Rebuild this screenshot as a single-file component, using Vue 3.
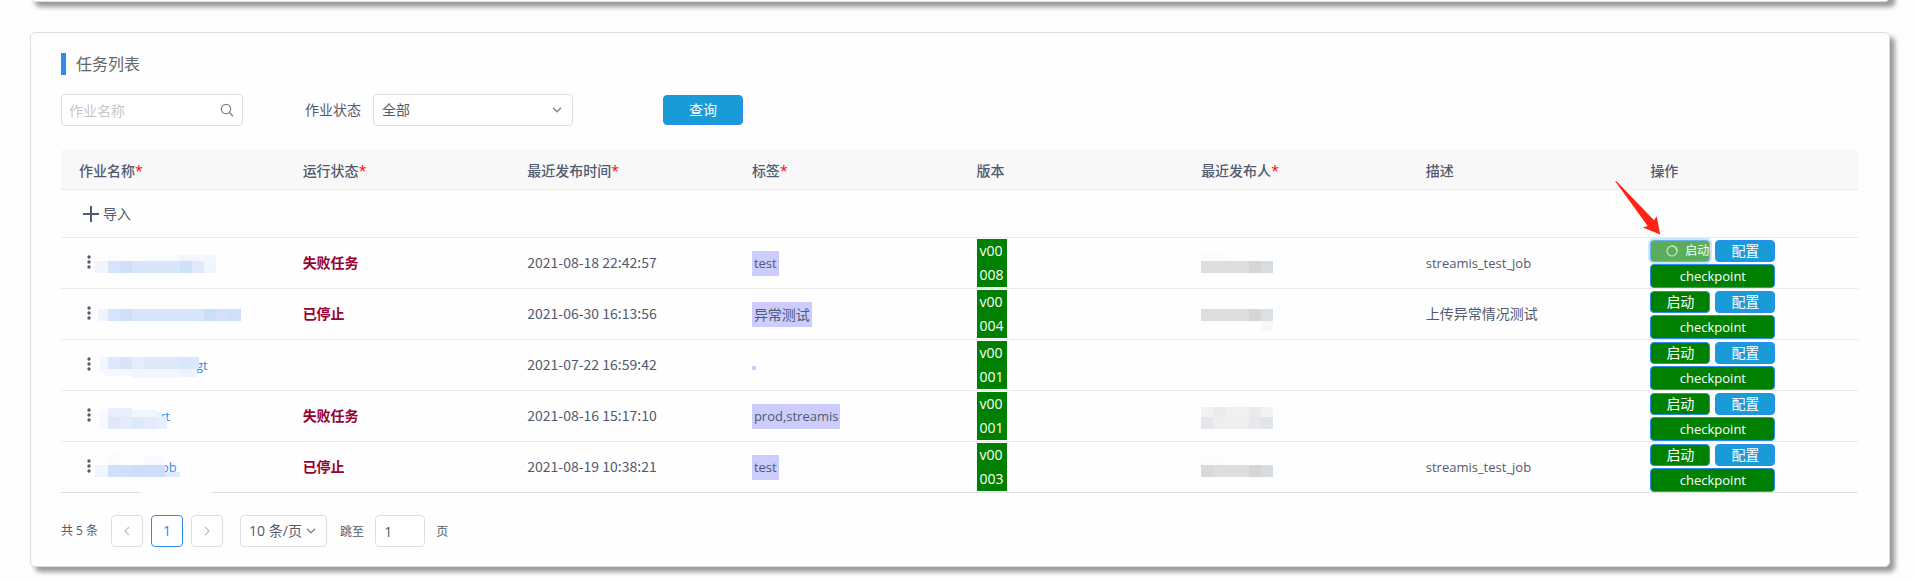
<script setup>
import { ref } from 'vue'

const keyword = ref('')
const status = ref('all')
const pageSize = ref('10')
const jumpTo = ref('1')

const columns = [
  { title: '作业名称', required: true },
  { title: '运行状态', required: true },
  { title: '最近发布时间', required: true },
  { title: '标签', required: true },
  { title: '版本', required: false },
  { title: '最近发布人', required: true },
  { title: '描述', required: false },
  { title: '操作', required: false }
]

// Chinese copy is set one size larger than Latin copy in the table body.
const isChinese = (text) => /[\u4e00-\u9fff]/.test(text)

// Mask pieces are [x, y, width, height, fill] inside a 24px high strip.
const jobs = [
  {
    id: 1, tail: '', maskWidth: 122, state: '失败任务', time: '2021-08-18 22:42:57', tag: 'test',
    version: ['v00', '008'], desc: 'streamis_test_job', loading: true,
    mask: [[50, 4, 36, 6, '#f8fafe'], [86, 4, 36, 6, '#f2f7fe'], [14, 3, 12, 7, '#fbfcfe'], [0, 10, 14, 12, '#f1f5fd'], [14, 10, 12, 12, '#d7e4fb'], [26, 10, 12, 12, '#cfdef9'], [38, 10, 48, 12, '#d8e5fb'], [86, 10, 12, 12, '#cfe1fa'], [98, 10, 12, 12, '#dfeafc'], [110, 10, 12, 12, '#f1f6fe']],
    owner: [[0, 2, 24, 8, '#fafcfb'], [0, 10, 48, 12, '#dcdddf'], [48, 10, 12, 12, '#d5d5d7'], [60, 10, 12, 12, '#d7dce1']]
  },
  {
    id: 2, tail: '', maskWidth: 148, state: '已停止', time: '2021-06-30 16:13:56', tag: '异常测试',
    version: ['v00', '004'], desc: '上传异常情况测试', loading: false,
    mask: [[4, 7, 10, 12, '#eef3fd'], [14, 7, 12, 12, '#d7e4fb'], [26, 7, 12, 12, '#cfdef9'], [38, 7, 72, 12, '#d8e5fb'], [110, 7, 12, 12, '#c9dff8'], [122, 7, 12, 12, '#d3e0f8'], [134, 7, 13, 12, '#cde0fa']],
    owner: [[0, 7, 48, 12, '#dcdddf'], [48, 7, 12, 12, '#d5d5d7'], [60, 7, 12, 12, '#dae0e4'], [60, 19, 12, 10, '#f8f8f9']]
  },
  {
    id: 3, tail: 'gt', maskWidth: 102, state: '', time: '2021-07-22 16:59:42', tag: '',
    version: ['v00', '001'], desc: '', loading: false,
    mask: [[6, 4, 8, 14, '#f1f5fe'], [14, 4, 12, 12, '#dfe8fb'], [26, 4, 12, 12, '#d7e3fb'], [38, 4, 12, 12, '#e5edfc'], [50, 4, 36, 12, '#dde8fb'], [86, 4, 19, 12, '#d9e7fc'], [10, 16, 28, 7, '#f5f8fe'], [38, 16, 48, 9, '#f2f6fe'], [86, 16, 17, 8, '#eef4fe']],
    owner: []
  },
  {
    id: 4, tail: 'rt', maskWidth: 66, state: '失败任务', time: '2021-08-16 15:17:10', tag: 'prod,streamis',
    version: ['v00', '001'], desc: '', loading: false,
    mask: [[5, 6, 9, 18, '#f7f9fe'], [14, 4, 24, 9, '#e8effc'], [38, 6, 24, 7, '#f0f5fe'], [62, 8, 6, 6, '#edf3fe'], [14, 13, 12, 12, '#dfe8fb'], [26, 13, 12, 12, '#e4ecfb'], [38, 13, 12, 12, '#dce9fb'], [50, 13, 12, 12, '#e3ecfb'], [62, 13, 11, 12, '#e7effd']],
    owner: [[0, 3, 12, 10, '#f1f2f3'], [12, 3, 12, 10, '#e9ebec'], [24, 3, 24, 10, '#eff0f1'], [48, 3, 12, 10, '#ebebec'], [60, 3, 12, 10, '#f1f3f5'], [0, 13, 12, 12, '#e6e7ea'], [12, 13, 36, 12, '#eeeeef'], [48, 13, 12, 12, '#e8e9ec'], [60, 13, 12, 12, '#e0e5e9']]
  },
  {
    id: 5, tail: 'ob', maskWidth: 67, state: '已停止', time: '2021-08-19 10:38:21', tag: 'test',
    version: ['v00', '003'], desc: 'streamis_test_job', loading: false,
    mask: [[14, -3, 12, 13, '#fafbfe'], [50, 0, 20, 10, '#f8fafe'], [1, 10, 13, 12, '#f1f5fe'], [14, 10, 24, 12, '#d1e0fa'], [38, 10, 33, 12, '#cddefa'], [71, 17, 15, 5, '#dfeafd'], [47, 35, 70, 5, '#fdfdfd']],
    owner: [[0, 1, 24, 9, '#fafbfb'], [0, 10, 12, 12, '#d7d9da'], [12, 10, 36, 12, '#dddfdf'], [48, 10, 12, 12, '#d3d5d7'], [60, 10, 12, 12, '#d7dce1']]
  }
]
</script>

<template>
  <div class="page">
    <section class="card card-above"></section>

    <section class="card task-card">
      <h1 class="title">任务列表</h1>

      <form class="filters" @submit.prevent>
        <div class="search">
          <input v-model="keyword" class="field" type="text" placeholder="作业名称" aria-label="作业名称" />
          <svg class="search-icon" viewBox="0 0 14 14" width="14" height="14" aria-hidden="true">
            <circle cx="6" cy="6" r="4.7" fill="none" stroke="#808695" stroke-width="1.2" />
            <path d="M9.4 9.4 13 13.2" fill="none" stroke="#808695" stroke-width="1.4" />
          </svg>
        </div>
        <label class="status-label" for="job-status">作业状态</label>
        <div class="select status-select">
          <select id="job-status" v-model="status" class="field">
            <option value="all">全部</option>
          </select>
          <svg class="chevron" viewBox="0 0 10 6" width="10" height="6" aria-hidden="true">
            <path d="M1 .8 5 4.8 9 .8" fill="none" stroke="#808695" stroke-width="1.4" />
          </svg>
        </div>
        <button class="query" type="submit">查询</button>
      </form>

      <table class="jobs">
        <thead>
          <tr>
            <th v-for="col in columns" :key="col.title" scope="col">
              {{ col.title }}<span v-if="col.required" class="required">*</span>
            </th>
          </tr>
        </thead>
        <tbody>
          <tr class="import-row">
            <td colspan="8">
              <button class="import" type="button">
                <svg viewBox="0 0 16 16" width="16" height="16" aria-hidden="true">
                  <path d="M8 0v16M0 8h16" fill="none" stroke="#515a6e" stroke-width="2" />
                </svg>
                <span>导入</span>
              </button>
            </td>
          </tr>
          <tr v-for="job in jobs" :key="job.id">
            <td>
              <div class="name">
                <button class="more" type="button" aria-label="更多">
                  <svg viewBox="0 0 4 14" width="4" height="14" aria-hidden="true">
                    <circle cx="2" cy="2" r="1.7" fill="#515a6e" />
                    <circle cx="2" cy="7" r="1.7" fill="#515a6e" />
                    <circle cx="2" cy="12" r="1.7" fill="#515a6e" />
                  </svg>
                </button>
                <svg class="mask" :width="job.maskWidth" height="24" aria-hidden="true">
                  <rect v-for="(m, i) in job.mask" :key="i" :x="m[0]" :y="m[1]" :width="m[2]" :height="m[3]" :fill="m[4]" />
                </svg>
                <a v-if="job.tail" class="tail" href="#">{{ job.tail }}</a>
              </div>
            </td>
            <td><strong class="state">{{ job.state }}</strong></td>
            <td class="time">{{ job.time }}</td>
            <td><span class="tag" :class="{ empty: !job.tag, chinese: isChinese(job.tag) }">{{ job.tag }}</span></td>
            <td>
              <div class="version"><span v-for="part in job.version" :key="part">{{ part }}</span></div>
            </td>
            <td>
              <svg class="mask" width="72" height="24" aria-hidden="true">
                <rect v-for="(m, i) in job.owner" :key="i" :x="m[0]" :y="m[1]" :width="m[2]" :height="m[3]" :fill="m[4]" />
              </svg>
            </td>
            <td><span :class="{ chinese: isChinese(job.desc) }">{{ job.desc }}</span></td>
            <td>
              <div class="actions">
                <button class="btn start" :class="{ loading: job.loading }" type="button">
                  <svg v-if="job.loading" viewBox="0 0 12 12" width="12" height="12" aria-hidden="true">
                    <circle cx="6" cy="6" r="5" fill="none" stroke="#b6dab6" stroke-width="1.5" />
                    <path d="M6 1a5 5 0 0 1 5 5" fill="none" stroke="#c4e1c4" stroke-width="1.5" />
                  </svg>
                  <span>启动</span>
                </button>
                <button class="btn config" type="button">配置</button>
                <button class="btn checkpoint" type="button">checkpoint</button>
                <svg v-if="job.loading" class="pointer" viewBox="0 0 46 54" width="46" height="54" aria-hidden="true">
                  <path d="M0 0 2 .7 39 39.2 41.7 35.3 45.2 53.5 27.8 46.5 32.7 45z" fill="#ff2316" />
                </svg>
              </div>
            </td>
          </tr>
        </tbody>
      </table>

      <nav class="pager" aria-label="分页">
        <span class="small">共 5 条</span>
        <div class="pages">
          <button class="page-btn" type="button" aria-label="上一页" disabled>
            <svg viewBox="0 0 6 10" width="6" height="10"><path d="M5 1 1 5l4 4" fill="none" stroke="#c0c4cc" stroke-width="1.4" /></svg>
          </button>
          <button class="page-btn current" type="button" aria-current="page">1</button>
          <button class="page-btn" type="button" aria-label="下一页" disabled>
            <svg viewBox="0 0 6 10" width="6" height="10"><path d="M1 1l4 4-4 4" fill="none" stroke="#c0c4cc" stroke-width="1.4" /></svg>
          </button>
        </div>
        <div class="select size-select">
          <select v-model="pageSize" class="field" aria-label="每页条数">
            <option value="10">10 条/页</option>
          </select>
          <svg class="chevron" viewBox="0 0 10 6" width="10" height="6" aria-hidden="true">
            <path d="M1 .8 5 4.8 9 .8" fill="none" stroke="#808695" stroke-width="1.4" />
          </svg>
        </div>
        <label class="small jump-label" for="jump-page">跳至</label>
        <input id="jump-page" v-model="jumpTo" class="field jump" type="text" />
        <span class="small jump-label">页</span>
      </nav>
    </section>
  </div>
</template>

<style>
body {
  margin: 0;
  background: #fefefe;
}
</style>

<style scoped>
.page {
  display: flex;
  flex-direction: column;
  gap: 30px;
  padding: 0 24px 13px 30px;
  overflow: hidden;
  color: #515a6e;
  font: 14px/24px "Open Sans", "Noto Sans CJK SC", sans-serif;
}

button,
input,
select {
  box-sizing: border-box;
  margin: 0;
  padding: 0;
  color: inherit;
  font: inherit;
}

.card {
  background: #fefefe;
  border: 1px solid #dcdee2;
  border-radius: 5px;
  box-shadow: 5px 5px 5px #999;
}

.card-above {
  height: 40px;
  margin-top: -40px;
}

.task-card {
  padding: 20px 30px 19px;
}

.title {
  margin: 0;
  padding-left: 10px;
  border-left: 5px solid #2d8cf0;
  color: #666;
  font-size: 16px;
  font-weight: 400;
  line-height: 22px;
}

.filters {
  display: flex;
  align-items: center;
  margin-top: 19px;
}

.search {
  position: relative;
  width: 182px;
}

.field {
  display: block;
  width: 100%;
  height: 32px;
  padding: 0 8px;
  border: 1px solid #dcdee2;
  border-radius: 4px;
  background: #fff;
  outline: none;
  appearance: none;
}

.search .field {
  padding: 0 7px;
}

.field::placeholder {
  color: #c5c8ce;
  opacity: 1;
}

.search-icon {
  position: absolute;
  top: 9px;
  right: 9px;
}

.status-label {
  margin: 0 12px 0 62px;
}

.select {
  position: relative;
}

.status-select {
  width: 200px;
}

.chevron {
  position: absolute;
  top: 13px;
  right: 11px;
  pointer-events: none;
}

.query {
  width: 80px;
  height: 30px;
  margin-left: 90px;
  border: 1px solid #2d8cf0;
  border-radius: 4px;
  background: #199bd8;
  color: #fff;
}

.jobs {
  width: calc(100% - 1px);
  margin-top: 24px;
  border-collapse: separate;
  border-spacing: 0;
  table-layout: fixed;
}

.jobs th {
  height: 37px;
  padding: 2px 18px 0;
  border-bottom: 1px solid #e8eaec;
  background: #f8f8f9;
  font-weight: 500;
  text-align: left;
}

.jobs th,
.jobs td {
  padding-left: 17px;
}

.jobs th:first-child,
.jobs td:first-child {
  padding-left: 18px;
}

.required {
  color: #f00;
}

.jobs td {
  height: 50px;
  padding-top: 0;
  padding-right: 18px;
  padding-bottom: 0;
  border-bottom: 1px solid #e8eaec;
  font-size: 13px;
}

.jobs .time {
  height: 48px;
  padding-bottom: 2px;
  font-family: "Noto Sans CJK SC", sans-serif;
  font-size: 14px;
}

.jobs .chinese {
  font-size: 14px;
}

.jobs tr:last-child td {
  border-bottom-color: #dcdee2;
}

.jobs .import-row td {
  height: 47px;
}

.import {
  display: flex;
  align-items: center;
  gap: 4px;
  padding-left: 4px;
  border: 0;
  background: none;
  font-size: 14px;
}

.name {
  display: flex;
  align-items: center;
}

.more {
  display: flex;
  padding: 0 3px 2px 8px;
  border: 0;
  background: none;
}

.mask {
  position: relative;
  z-index: 1;
  display: block;
  overflow: visible;
}

.tail {
  color: #2d8cf0;
  text-decoration: none;
}

.state {
  color: #903;
  font-size: 14px;
}

.tag {
  display: inline-block;
  padding: 0 2px;
  background: #ccf;
  line-height: 25px;
  vertical-align: top;
}

.tag.empty {
  width: 0;
  height: 4px;
  vertical-align: baseline;
}

.version {
  display: inline-flex;
  flex-direction: column;
  padding: 0 3px;
  background: green;
  color: #fff;
  font-size: 14px;
  vertical-align: top;
}

.actions {
  position: relative;
  display: grid;
  grid-template-columns: 60px 60px;
  gap: 2px 5px;
  padding-top: 2px;
}

.btn {
  height: 22px;
  border: 1px solid #2d8cf0;
  border-radius: 4px;
  background: green;
  color: #fff;
  font-size: 14px;
  line-height: 20px;
}

.btn.config {
  background: #199bd8;
}

.btn.checkpoint {
  grid-column: span 2;
  height: 24px;
  font-size: 13px;
}

.btn.loading {
  display: flex;
  align-items: center;
  justify-content: flex-end;
  gap: 7px;
  background: #5aad5a;
  border-color: #6cb0ee;
  box-shadow: 0 0 0 2px #d0e4fb;
  font-size: 12px;
}

.pointer {
  position: absolute;
  top: -57px;
  left: -35px;
}

.pager {
  display: flex;
  align-items: center;
  margin-top: 22px;
}

.small {
  font-size: 12px;
}

.jump-label {
  padding-top: 2px;
}

.pages {
  display: flex;
  gap: 8px;
  margin: 0 17px 0 13px;
}

.page-btn {
  display: flex;
  align-items: center;
  justify-content: center;
  width: 32px;
  height: 32px;
  border: 1px solid #dcdee2;
  border-radius: 4px;
  background: #fff;
}

.page-btn.current {
  border-color: #2d8cf0;
  color: #2d8cf0;
}

.size-select {
  width: 87px;
  margin-right: 13px;
}

.jump {
  width: 50px;
  margin: 0 11px;
}
</style>
